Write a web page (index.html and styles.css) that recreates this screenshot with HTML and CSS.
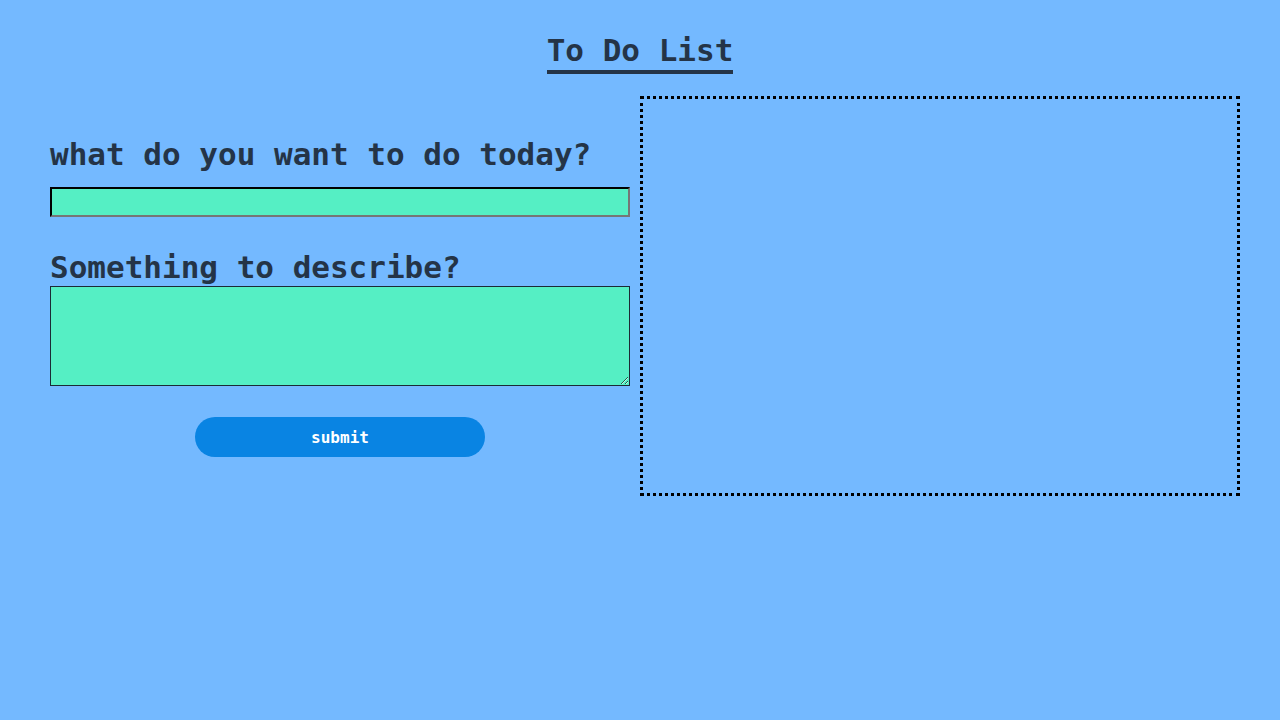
FILE: index.html
```html
<!DOCTYPE html>
<html lang="en">
<head>
<meta charset="utf-8">
<title>To Do List</title>
<link rel="stylesheet" href="styles.css">
</head>
<body>
<header class="header">
  <h1 class="title"><span class="title-text">To Do List</span></h1>
</header>
<main class="main">
  <form class="form">
    <label class="label label-first" for="task">what do you want to do today?</label>
    <input class="input" id="task" type="text">
    <label class="label label-second" for="desc">Something to describe?</label>
    <textarea class="textarea" id="desc"></textarea>
    <div class="actions">
      <button class="submit" type="button">submit</button>
    </div>
  </form>
  <section class="list"></section>
</main>
</body>
</html>
```
FILE: styles.css
```css
html, body {
  margin: 0;
  padding: 0;
}
body {
  background: #74b9ff;
  color: #243447;
  font-family: "DejaVu Sans Mono", "Liberation Mono", monospace;
  width: 1280px;
  height: 720px;
  overflow: hidden;
}
.header {
  text-align: center;
  padding-top: 32px;
}
.title {
  margin: 0;
  font-size: 31px;
  line-height: 36px;
  font-weight: bold;
}
.title-text {
  display: inline-block;
  border-bottom: 4px solid #243447;
  line-height: 36px;
  padding-bottom: 2px;
}
.main {
  display: flex;
  padding: 0 40px;
  margin-top: 22px;
}
.form {
  width: 600px;
  padding: 0 10px;
  box-sizing: border-box;
  display: flex;
  flex-direction: column;
}
.label {
  display: block;
  font-size: 31px;
  line-height: 36px;
  font-weight: bold;
}
.label-first {
  margin-top: 40px;
}
.input {
  margin-top: 15px;
  width: 580px;
  height: 30px;
  box-sizing: border-box;
  background: #55efc4;
  border: 2px inset #767676;
  border-top-color: #1b2a35;
  border-left-color: #1b2a35;
  padding: 0 4px;
  font-family: inherit;
}
.label-second {
  margin-top: 32px;
}
.textarea {
  margin-top: 1px;
  width: 580px;
  height: 100px;
  box-sizing: border-box;
  background: #55efc4;
  border: 1px solid #1b2a35;
  font-family: inherit;
  display: block;
}
.actions {
  display: flex;
  justify-content: center;
  margin-top: 31px;
}
.submit {
  width: 290px;
  height: 40px;
  border: none;
  border-radius: 20px;
  background: #0984e3;
  color: #ffffff;
  font-family: "DejaVu Sans Mono", monospace;
  font-weight: bold;
  font-size: 16px;
  cursor: pointer;
}
.list {
  width: 600px;
  height: 400px;
  box-sizing: border-box;
  border: 3px dotted #000000;
}
```
